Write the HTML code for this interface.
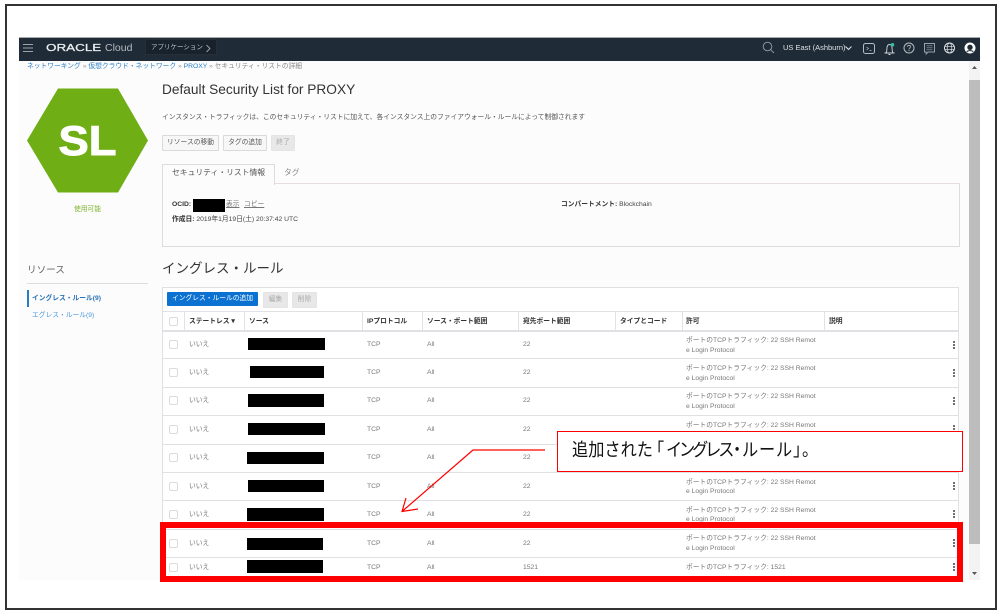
<!DOCTYPE html>
<html lang="ja"><head><meta charset="utf-8"><title>Default Security List for PROXY</title>
<style>
html,body{margin:0;padding:0;background:#fff}
#p{position:relative;width:1000px;height:613px;overflow:hidden;background:#fff;font-family:"Liberation Sans","Noto Sans CJK JP",sans-serif;font-size:6.75px;color:#555}
#p div,#p span.a{position:absolute;white-space:nowrap}
.l{line-height:10px;height:10px;margin-top:1px}
.g{color:#777}
.h{color:#333;font-weight:bold;font-size:6.75px;line-height:10px;height:10px;top:317px}
.v{position:absolute;width:1px;background:#dfe2e6;top:312px;height:18px}
.r{position:absolute;left:163px;width:795px;height:1px;background:#dfe1e4}
.c{position:absolute;left:169px;width:7px;height:7px;margin-top:.5px;border:1px solid #dcdcdc;border-radius:2px;background:#fff}
.b{position:absolute;background:#000}
.k{position:absolute;left:953px;width:2px;height:8px;background:radial-gradient(circle at 1px 1px,#555 1px,transparent 1.1px) 0 0/2px 3px}
.btn{position:absolute;height:14px;line-height:14px;text-align:center;border:1px solid #dadada;background:#f7f7f7;color:#555;font-size:6.75px;border-radius:1px;box-sizing:content-box}
.dis{background:#e8e8e8;border-color:#e4e4e4;color:#aaa}
.cj{font-family:"Noto Sans CJK JP",sans-serif;font-size:18px;line-height:24px;color:#111;top:437px;transform:scaleX(.9);transform-origin:0 0}
</style></head><body>
<div id="p">
<div style="left:5px;top:4px;width:988px;height:602px;border:2px solid #333"></div>

<div style="left:19px;top:61px;width:950px;height:519px;background:#fdfcfc"></div>

<div style="left:19px;top:37px;width:961px;height:24px;background:#1f2b37"></div>
<div style="left:19px;top:36.5px;width:961px;height:1px;background:#aaa"></div>
<svg style="position:absolute;left:0;top:0" width="1000" height="70" fill="none">
<path d="M23 44.500h10M23 48h10M23 51.500h10" stroke="#9aa3ab" stroke-width="1"/>
<circle cx="767.500" cy="46.500" r="4.300" stroke="#8c959d"/><path d="M770.700 49.700L774 53" stroke="#8c959d"/>
<path d="M845.500 46.500l3 3 3-3" stroke="#dfe3e6" stroke-width="1"/>
<rect x="863.500" y="43.500" width="11" height="10" rx="2" stroke="#b5bbc0"/><path d="M866.500 47l2 1.500-2 1.500M869.500 50.500h2" stroke="#b5bbc0" stroke-width=".7"/>
<path d="M884.500 53h10M886 53c1.200-2 .8-4 1-5.500.2-1.500 1-3 2.500-3s2.300 1.500 2.500 3c.2 1.500-.2 3.500 1 5.500M888.500 54.500h2" stroke="#d5d8db" stroke-width=".9"/>
<circle cx="892.500" cy="44.800" r="1.800" fill="#2fc49b"/>
<circle cx="909" cy="48" r="5" stroke="#b5bbc0"/><path d="M907.500 46.800c0-2 3-2 3 0 0 1.200-1.500 1-1.500 2.500" stroke="#b5bbc0" stroke-width=".8"/><circle cx="909" cy="50.500" r=".6" fill="#b5bbc0"/>
<path d="M924.500 43.500h10v8.500h-6.500l-1.800 2v-2h-1.700z" stroke="#9aa2a9"/><path d="M926.500 45.800h6M926.500 47.800h6M926.500 49.800h6" stroke="#9aa2a9" stroke-width=".7"/>
<circle cx="949.500" cy="48" r="5" stroke="#dfe2e4"/><ellipse cx="949.500" cy="48" rx="2.300" ry="5" stroke="#dfe2e4" stroke-width=".7"/><path d="M944.500 46.300h10M944.500 49.700h10" stroke="#dfe2e4" stroke-width=".7"/>
<circle cx="970" cy="48" r="5.500" fill="#fff"/><circle cx="970" cy="47.300" r="2.700" fill="#1f2b37"/><path d="M966.800 52c.8-1.800 5.600-1.800 6.400 0" stroke="#1f2b37"/>
</svg>
<div style="left:46px;top:41px;font-size:10.500px;line-height:14px;color:#eceef0;-webkit-text-stroke:.25px #eceef0;transform:scaleX(1.28);transform-origin:0 0">ORACLE</div>
<div style="left:105px;top:41px;font-size:10.500px;line-height:14px;color:#b5bbc0">Cloud</div>
<div style="left:145px;top:39px;width:72px;height:16px;background:#18222c;border:1px solid #262f38;box-sizing:border-box"></div>
<div style="left:151px;top:43px;font-size:6.500px;line-height:10px;color:#bcc2c7">アプリケーション</div>
<svg style="position:absolute;left:205px;top:43.500px" width="7" height="9" fill="none"><path d="M1.500 1l3.500 3.500-3.500 3.500" stroke="#bcc2c7" stroke-width=".8"/></svg>
<div style="left:783px;top:43px;font-size:7.500px;line-height:10px;color:#dce0e3">US East (Ashburn)</div>

<div style="left:969px;top:61px;width:11px;height:519px;background:#f3f3f3"></div>
<div style="left:969px;top:80px;width:11px;height:464px;background:#bdbdbd"></div>
<svg style="position:absolute;left:969px;top:61px" width="11" height="519"><path d="M3 8h5L5.500 5zM3 511h5l-2.500 3z" fill="#555"/></svg>

<div class="l" style="left:27px;top:61px;color:#2a80c8">ネットワーキング <span style="color:#999">»</span> 仮想クラウド・ネットワーク <span style="color:#999">»</span> PROXY <span style="color:#999">»</span> <span style="color:#888">セキュリティ・リストの詳細</span></div>

<svg style="position:absolute;left:0;top:80px" width="160" height="120"><path d="M58 8.500H118L148 60.500 118 112.500H58L27 60.500z" fill="#6fae15"/></svg>
<div style="left:27px;top:115px;width:121px;text-align:center;font-size:42px;line-height:52px;font-weight:bold;color:#fff;-webkit-text-stroke:1px #fff;transform:scaleX(1.08)">SL</div>
<div class="l" style="left:27px;top:204px;width:121px;text-align:center;color:#7db52e">使用可能</div>

<div style="left:162px;top:81px;font-size:13.700px;line-height:18px;color:#333">Default Security List for PROXY</div>
<div class="l" style="left:162px;top:112px;color:#555">インスタンス・トラフィックは、このセキュリティ・リストに加えて、各インスタンス上のファイアウォール・ルールによって制御されます</div>
<div class="btn" style="left:162px;top:135px;width:55px">リソースの移動</div>
<div class="btn" style="left:223px;top:135px;width:42px">タグの追加</div>
<div class="btn dis" style="left:271px;top:135px;width:22px">終了</div>

<div style="left:162px;top:183px;width:796px;height:62px;border:1px solid #dcdcdc;box-sizing:content-box;border-top-color:#e8dcdc"></div>
<div style="left:162px;top:164px;width:111px;height:20px;border:1px solid #dcdcdc;border-bottom:none;background:#fdfcfc"></div>
<div style="left:172px;top:167px;font-size:7.800px;line-height:12px;color:#555">セキュリティ・リスト情報</div>
<div style="left:284px;top:167px;font-size:7.800px;line-height:12px;color:#888">タグ</div>
<div class="l" style="left:172px;top:199px;font-weight:bold;color:#333">OCID:</div>
<div class="b" style="left:192.500px;top:199px;width:32.500px;height:13px"></div>
<div class="l" style="left:226px;top:199px;color:#777;text-decoration:underline">表示</div>
<div class="l" style="left:244px;top:199px;color:#777;text-decoration:underline">コピー</div>
<div class="l" style="left:172px;top:214px;color:#444"><b style="color:#333">作成日:</b> 2019年1月19日(土) 20:37:42 UTC</div>
<div class="l" style="left:561px;top:199px;color:#444"><b style="color:#333">コンパートメント:</b> Blockchain</div>

<div style="left:27px;top:264px;font-size:9.600px;line-height:14px;color:#666">リソース</div>
<div style="left:27px;top:283px;width:121px;height:1px;background:#ddd"></div>
<div style="left:27px;top:290px;width:1.500px;height:17px;background:#2a7bc4"></div>
<div class="l" style="left:32px;top:293px;font-weight:bold;color:#2a74b8">イングレス・ルール(9)</div>
<div class="l" style="left:32px;top:310px;color:#4a98dc">エグレス・ルール(9)</div>

<div style="left:162px;top:260px;font-size:13.500px;line-height:18px;color:#333">イングレス・ルール</div>

<div style="left:162px;top:287px;width:797px;height:292px;background:#fff;border:1px solid #e0e0e0;box-sizing:border-box"></div>
<div class="btn" style="left:167px;top:292px;width:91px;background:#0b72d2;border:none;color:#fff;border-radius:1px">イングレス・ルールの追加</div>
<div class="btn dis" style="left:263px;top:292px;width:23px">編集</div>
<div class="btn dis" style="left:292px;top:292px;width:23px">削除</div>

<div class="r" style="top:311px"></div><div class="r" style="top:330px;height:1.500px"></div>
<span class="v" style="left:184px"></span><span class="v" style="left:244px"></span><span class="v" style="left:362px"></span><span class="v" style="left:422px"></span><span class="v" style="left:518px"></span><span class="v" style="left:615px"></span><span class="v" style="left:682px"></span><span class="v" style="left:824px"></span>
<span class="c" style="top:316px"></span>
<div class="h" style="left:189px">ステートレス ▾</div><div class="h" style="left:249px">ソース</div><div class="h" style="left:367px">IPプロトコル</div><div class="h" style="left:427px">ソース・ポート範囲</div><div class="h" style="left:523px">宛先ポート範囲</div><div class="h" style="left:620px">タイプとコード</div><div class="h" style="left:686px">許可</div><div class="h" style="left:829px">説明</div>

<div class="r" style="top:358px"></div><div class="r" style="top:387px"></div><div class="r" style="top:415px"></div><div class="r" style="top:444px"></div><div class="r" style="top:472px"></div><div class="r" style="top:500px"></div><div class="r" style="top:529px"></div><div class="r" style="top:557px"></div>

<span class="c" style="top:339px"></span><div class="l g" style="left:189px;top:339px">いいえ</div><div class="b" style="left:247.500px;top:338px;width:77px;height:12px"></div><div class="l g" style="left:367px;top:339px">TCP</div><div class="l g" style="left:427px;top:339px">All</div><div class="l g" style="left:523px;top:339px">22</div><div class="l g" style="left:686px;top:335px">ポートのTCPトラフィック: 22 SSH Remot</div><div class="l g" style="left:686px;top:344.500px">e Login Protocol</div><span class="k" style="top:341px"></span>

<span class="c" style="top:367px"></span><div class="l g" style="left:189px;top:367px">いいえ</div><div class="b" style="left:250px;top:366px;width:74px;height:12px"></div><div class="l g" style="left:367px;top:367px">TCP</div><div class="l g" style="left:427px;top:367px">All</div><div class="l g" style="left:523px;top:367px">22</div><div class="l g" style="left:686px;top:363px">ポートのTCPトラフィック: 22 SSH Remot</div><div class="l g" style="left:686px;top:372.500px">e Login Protocol</div><span class="k" style="top:369px"></span>

<span class="c" style="top:395px"></span><div class="l g" style="left:189px;top:395px">いいえ</div><div class="b" style="left:248px;top:394px;width:76px;height:13px"></div><div class="l g" style="left:367px;top:395px">TCP</div><div class="l g" style="left:427px;top:395px">All</div><div class="l g" style="left:523px;top:395px">22</div><div class="l g" style="left:686px;top:391px">ポートのTCPトラフィック: 22 SSH Remot</div><div class="l g" style="left:686px;top:400.500px">e Login Protocol</div><span class="k" style="top:397px"></span>

<span class="c" style="top:424px"></span><div class="l g" style="left:189px;top:424px">いいえ</div><div class="b" style="left:248px;top:423px;width:77px;height:12px"></div><div class="l g" style="left:367px;top:424px">TCP</div><div class="l g" style="left:427px;top:424px">All</div><div class="l g" style="left:523px;top:424px">22</div><div class="l g" style="left:686px;top:419.500px">ポートのTCPトラフィック: 22 SSH Remot</div><span class="k" style="top:425px"></span>

<span class="c" style="top:452px"></span><div class="l g" style="left:189px;top:452px">いいえ</div><div class="b" style="left:246.500px;top:451.500px;width:77px;height:12px"></div><div class="l g" style="left:367px;top:452px">TCP</div><div class="l g" style="left:427px;top:452px">All</div><div class="l g" style="left:523px;top:452px">22</div>

<span class="c" style="top:481px"></span><div class="l g" style="left:189px;top:481px">いいえ</div><div class="b" style="left:248px;top:479.500px;width:75.500px;height:12px"></div><div class="l g" style="left:367px;top:481px">TCP</div><div class="l g" style="left:427px;top:481px">All</div><div class="l g" style="left:523px;top:481px">22</div><div class="l g" style="left:686px;top:476.500px">ポートのTCPトラフィック: 22 SSH Remot</div><div class="l g" style="left:686px;top:486px">e Login Protocol</div><span class="k" style="top:482px"></span>

<span class="c" style="top:509px"></span><div class="l g" style="left:189px;top:509px">いいえ</div><div class="b" style="left:246.500px;top:508px;width:77px;height:12.500px"></div><div class="l g" style="left:367px;top:509px">TCP</div><div class="l g" style="left:427px;top:509px">All</div><div class="l g" style="left:523px;top:509px">22</div><div class="l g" style="left:686px;top:505px">ポートのTCPトラフィック: 22 SSH Remot</div><div class="l g" style="left:686px;top:514px">e Login Protocol</div><span class="k" style="top:510px"></span>

<span class="c" style="top:538px"></span><div class="l g" style="left:189px;top:538px">いいえ</div><div class="b" style="left:246.500px;top:538px;width:76px;height:12px"></div><div class="l g" style="left:367px;top:538px">TCP</div><div class="l g" style="left:427px;top:538px">All</div><div class="l g" style="left:523px;top:538px">22</div><div class="l g" style="left:686px;top:533px">ポートのTCPトラフィック: 22 SSH Remot</div><div class="l g" style="left:686px;top:542.700px">e Login Protocol</div><span class="k" style="top:539px"></span>

<span class="c" style="top:562px"></span><div class="l g" style="left:189px;top:562px">いいえ</div><div class="b" style="left:247px;top:560px;width:75.500px;height:13px"></div><div class="l g" style="left:367px;top:562px">TCP</div><div class="l g" style="left:427px;top:562px">All</div><div class="l g" style="left:523px;top:562px">1521</div><div class="l g" style="left:686px;top:562px">ポートのTCPトラフィック: 1521</div><span class="k" style="top:563px"></span>

<div style="left:160px;top:522px;width:803px;height:60px;border:6.500px solid #f00;box-sizing:border-box"></div>

<div style="left:557px;top:430.500px;width:406px;height:41.500px;background:#fff;border:1px solid #f00;box-sizing:border-box"></div>
<span class="a cj" style="left:571.500px">追加された</span><span class="a cj" style="left:648px">「</span><span class="a cj" style="left:666px;letter-spacing:-3.500px">イングレス</span><span class="a cj" style="left:728.500px">・</span><span class="a cj" style="left:741.500px;letter-spacing:.9px">ルール</span><span class="a cj" style="left:793px">」</span><span class="a cj" style="left:802px">。</span>
<svg style="position:absolute;left:0;top:0" width="1000" height="613" fill="none"><path d="M545 450H473L402 511.500M406 498L402 511.500 418 509" stroke="#f00" stroke-width="1.200"/></svg>
</div>
</body></html>
